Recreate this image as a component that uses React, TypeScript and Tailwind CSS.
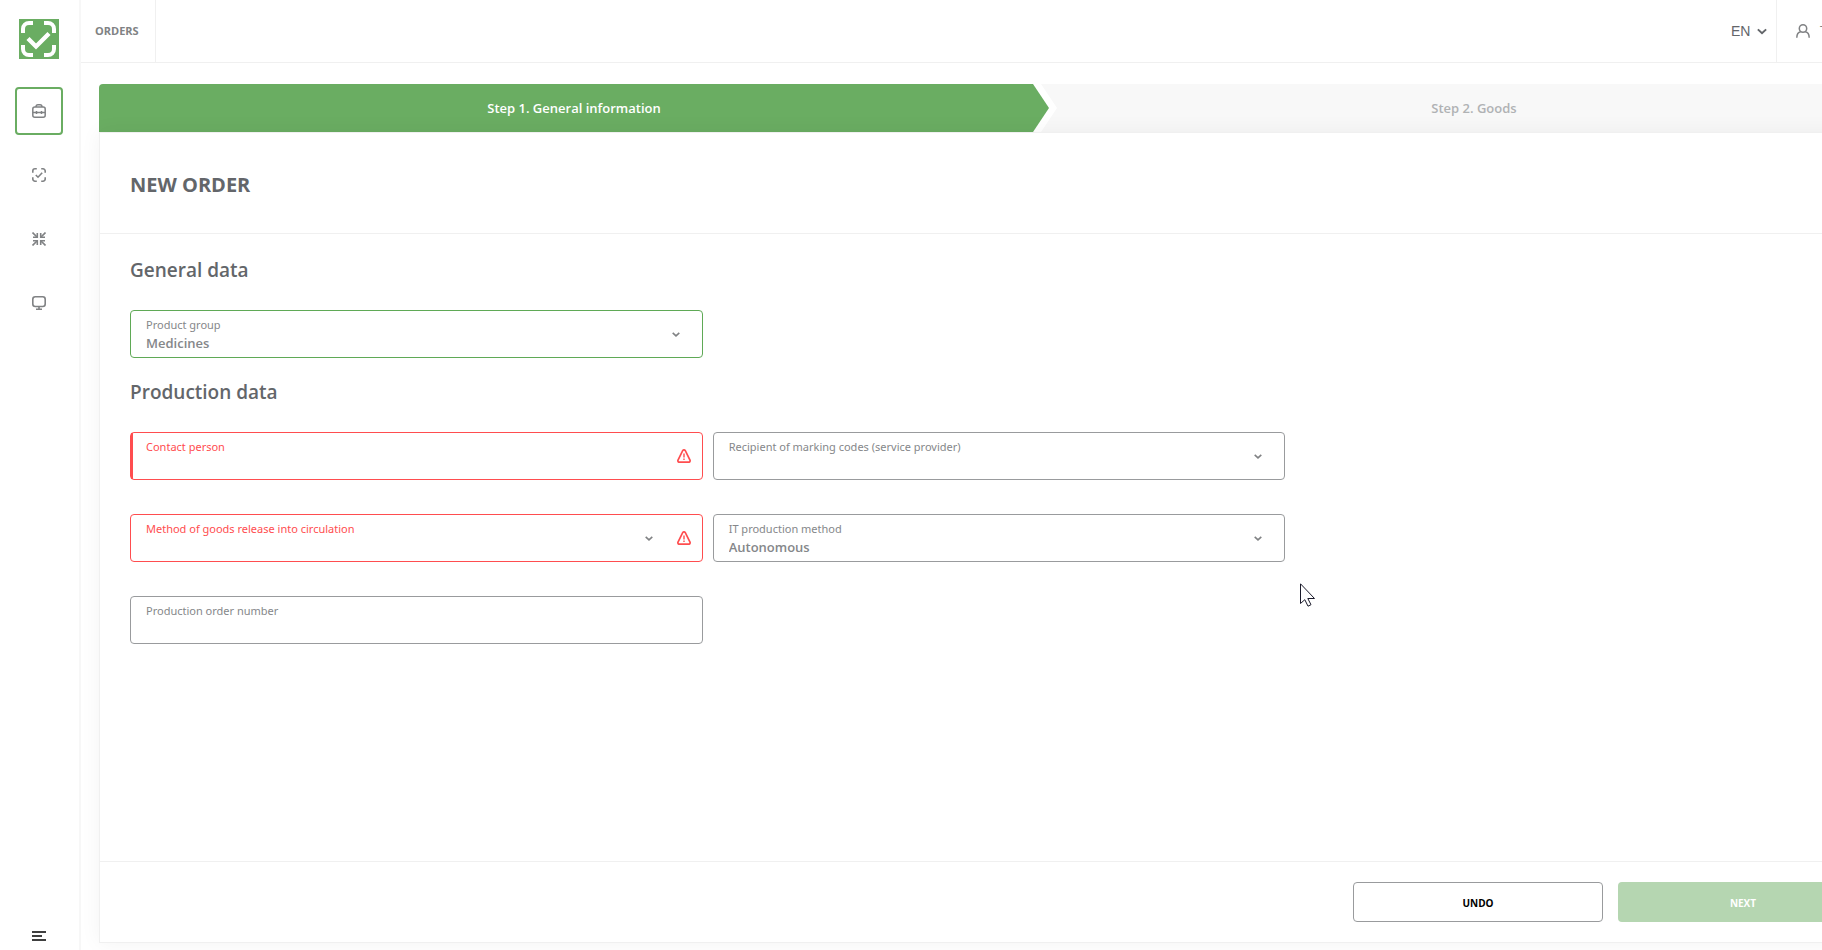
import { useState } from "react";
import type { ReactNode } from "react";

const tones = {
  ok: { border: "border-[#5fa956]", label: "text-[#85878a]" },
  error: { border: "border-[#ff4d4f]", label: "text-[#ff4d4f]" },
  plain: { border: "border-[#999b9d]", label: "text-[#85878a]" },
};

type Tone = keyof typeof tones;

const ChevronIcon = ({ className }: { className: string }) => (
  <svg viewBox="0 0 8 5" fill="none" stroke="currentColor" className={className}>
    <path d="M0.7 0.8 4 3.8 7.3 0.8" strokeWidth="1.6" />
  </svg>
);

const WarningIcon = () => (
  <svg
    viewBox="0 0 14 14"
    fill="none"
    stroke="currentColor"
    className="size-3.5 shrink-0 text-[#ff4d4f]"
  >
    <path
      d="M5.7 1.7a1.5 1.5 0 0 1 2.6 0l4.7 9.4c.4.9-.2 2.1-1.2 2.1H2.2c-1 0-1.6-1.2-1.2-2.1z"
      strokeWidth="1.7"
    />
    <path d="M7 4.5v4M7 9.5v1.5" strokeWidth="1.4" />
  </svg>
);

const LogoIcon = () => (
  <svg viewBox="0 0 40 40" fill="none" stroke="#fff" className="size-10">
    <path d="M0 0h40v40H0z" fill="#6aad62" stroke="none" />
    <path
      d="M4 14V10a6 6 0 0 1 6-6h4M25 4h4a6 6 0 0 1 6 6v4M35 26v4a6 6 0 0 1-6 6h-4M14 36h-4a6 6 0 0 1-6-6v-4"
      strokeWidth="4"
    />
    <path d="M9 19.5 17 27.5 30 14.5" strokeWidth="4.4" />
  </svg>
);

const BriefcaseIcon = () => (
  <svg viewBox="0 0 14 14" fill="none" stroke="currentColor" strokeWidth="1.5" className="size-3.5">
    <rect x="0.8" y="3" width="12.4" height="10.2" rx="2" />
    <path d="M4 3c0-1.4.8-2.2 2-2.2h2c1.2 0 2 .8 2 2.2M1 8.5h12M4.5 7v3M9.5 7v3" />
  </svg>
);

const ScanIcon = () => (
  <svg viewBox="0 0 14 14" fill="none" stroke="currentColor" strokeWidth="1.6" className="size-3.5">
    <path d="M.8 4.8V3A2.2 2.2 0 0 1 3 .8h1.8M9.2.8H11A2.2 2.2 0 0 1 13.2 3v1.8M13.2 9.2V11a2.2 2.2 0 0 1-2.2 2.2H9.2M4.8 13.2H3A2.2 2.2 0 0 1 .8 11V9.2" />
    <path d="M3.8 7 6 9.2 10.2 4.8" />
  </svg>
);

const CollapseIcon = () => (
  <svg viewBox="0 0 14 14" fill="none" stroke="currentColor" strokeWidth="1.6" className="size-3.5">
    <path d="M.5.5 5 5M13.5.5 9 5M.5 13.5 5 9M13.5 13.5 9 9" />
    <path d="M5.3 1v4.3H1M8.7 1v4.3H13M5.3 13V8.7H1M8.7 13V8.7H13" />
  </svg>
);

const MonitorIcon = () => (
  <svg viewBox="0 0 14 14" fill="none" stroke="currentColor" strokeWidth="1.6" className="size-3.5">
    <rect x="0.8" y="0.8" width="12.4" height="9.7" rx="2.5" />
    <path d="M7 10.5v2.5M4 13.2h6" />
  </svg>
);

const MenuIcon = () => (
  <svg viewBox="0 0 14 10" fill="none" stroke="currentColor" strokeWidth="1.6" className="h-2.5 w-3.5">
    <path d="M0 1h14M0 5h10M0 9h14" />
  </svg>
);

const UserIcon = () => (
  <svg viewBox="0 0 14 14" fill="none" stroke="currentColor" strokeWidth="1.5" className="size-3.5">
    <circle cx="7" cy="4.5" r="3.7" />
    <path d="M.8 13.8c0-3.5 1.7-5.6 4-6M13.2 13.8c0-3.5-1.7-5.6-4-6" />
  </svg>
);

const navItems = [
  { name: "Orders", icon: <BriefcaseIcon /> },
  { name: "Marking codes", icon: <ScanIcon /> },
  { name: "Aggregation", icon: <CollapseIcon /> },
  { name: "Devices", icon: <MonitorIcon /> },
];

const Field = ({
  id,
  label,
  tone = "plain",
  marked = false,
  children,
}: {
  id: string;
  label: string;
  tone?: Tone;
  marked?: boolean;
  children: ReactNode;
}) => (
  <div
    className={`relative flex h-12 items-center gap-6 rounded border pl-[15px] ${tones[tone].border}`}
  >
    {marked && <span className="absolute inset-y-0 left-0 w-0.5 bg-[#ff4d4f]" />}
    <label
      htmlFor={id}
      className={`pointer-events-none absolute top-1.5 font-['Noto_Sans',sans-serif] text-[11px] leading-4 ${tones[tone].label}`}
    >
      {label}
    </label>
    {children}
  </div>
);

const controlClass =
  "h-full min-w-0 flex-1 appearance-none bg-transparent pt-[22px] pb-1 text-[13px] leading-5 font-semibold text-[#85878a] outline-none";

const App = () => {
  const [active, setActive] = useState("Orders");
  const [group, setGroup] = useState("Medicines");
  const [contact, setContact] = useState("");
  const [recipient, setRecipient] = useState("");
  const [release, setRelease] = useState("");
  const [method, setMethod] = useState("Autonomous");
  const [orderNumber, setOrderNumber] = useState("");

  return (
    <div className="overflow-x-hidden bg-white font-['Open_Sans',sans-serif] text-[#63666a]">
      <div className="flex min-h-screen min-w-[1919px]">
        <aside className="flex w-[81px] shrink-0 flex-col border-r-2 border-[#f7f7f7] pt-[19px] pl-[15px] text-[#808284]">
          <a href="#" aria-label="Home" className="ml-1 size-10">
            <LogoIcon />
          </a>
          <nav className="mt-7 flex flex-col gap-4">
            {navItems.map((item) => (
              <button
                key={item.name}
                type="button"
                aria-label={item.name}
                onClick={() => setActive(item.name)}
                className={`flex size-12 items-center justify-center rounded border-2 ${
                  active === item.name ? "border-[#6aad62]" : "border-transparent"
                }`}
              >
                {item.icon}
              </button>
            ))}
          </nav>
          <button
            type="button"
            aria-label="Menu"
            className="mt-auto flex h-7 w-12 items-center justify-center text-black"
          >
            <MenuIcon />
          </button>
        </aside>

        <div className="flex flex-1 flex-col">
          <header className="flex h-[63px] border-b border-[#f0f0f0]">
            <a
              href="#"
              className="flex w-[75px] items-center border-r border-[#f0f0f0] pl-3.5 text-[11px] font-bold text-[#808284]"
            >
              ORDERS
            </a>
            <div className="ml-auto flex items-center gap-1.5 pr-[9px] font-['Liberation_Sans',sans-serif] text-sm text-[#63666a]">
              <select aria-label="Language" className="appearance-none bg-transparent outline-none">
                <option>EN</option>
              </select>
              <ChevronIcon className="h-[7px] w-2.5" />
            </div>
            <a
              href="#"
              className="flex w-[143px] items-center gap-2.5 border-l border-[#f0f0f0] pl-[19px] text-sm text-[#808284]"
            >
              <UserIcon />
              T
            </a>
          </header>

          <main className="flex flex-1 flex-col pt-[21px] pr-5 pb-[7px] pl-[18px]">
            <ol className="grid h-12 grid-cols-[19fr_17fr] text-[13px] font-semibold">
              <li className="flex items-center justify-center rounded-tl bg-[#6aad62] pt-0.5 text-white [clip-path:polygon(0_0,calc(100%_-_16px)_0,100%_50%,calc(100%_-_16px)_100%,0_100%)]">
                Step 1. General information
              </li>
              <li className="-ml-2 flex items-center justify-center bg-[#f8f8f8] pt-0.5 pl-2 text-[#b0b2b4] [clip-path:polygon(0_0,100%_0,100%_100%,0_100%,16px_50%)]">
                Step 2. Goods
              </li>
            </ol>

            <form
              onSubmit={(e) => e.preventDefault()}
              className="relative flex flex-1 flex-col border border-[#f0f0f0] bg-white shadow-[0_0_20px_rgba(0,0,0,0.05)]"
            >
              <div className="flex h-[101px] items-center border-b border-[#f0f0f0] px-[30px] pt-1">
                <h1 className="text-xl font-bold">NEW ORDER</h1>
              </div>

              <div className="flex-1 px-[30px] pt-6">
                <h2 className="text-[19px] leading-6 font-semibold">General data</h2>
                <div className="mt-7 grid grid-cols-3 gap-[10px]">
                  <Field id="group" label="Product group" tone="ok">
                    <select
                      id="group"
                      value={group}
                      onChange={(e) => setGroup(e.target.value)}
                      className={controlClass}
                    >
                      <option>Medicines</option>
                    </select>
                    <ChevronIcon className="mr-[22px] h-[5px] w-2 shrink-0 text-[#808284]" />
                  </Field>
                </div>

                <h2 className="mt-[22px] text-[19px] leading-6 font-semibold">Production data</h2>
                <div className="mt-7 grid grid-cols-3 gap-x-[10px] gap-y-[34px]">
                  <Field id="contact" label="Contact person" tone="error" marked>
                    <input
                      id="contact"
                      type="text"
                      value={contact}
                      onChange={(e) => setContact(e.target.value)}
                      className={controlClass}
                    />
                    <span className="pr-[11px]">
                      <WarningIcon />
                    </span>
                  </Field>
                  <Field id="recipient" label="Recipient of marking codes (service provider)">
                    <select
                      id="recipient"
                      value={recipient}
                      onChange={(e) => setRecipient(e.target.value)}
                      className={controlClass}
                    >
                      <option value=""></option>
                    </select>
                    <ChevronIcon className="mr-[22px] h-[5px] w-2 shrink-0 text-[#808284]" />
                  </Field>
                  <div />
                  <Field id="release" label="Method of goods release into circulation" tone="error">
                    <select
                      id="release"
                      value={release}
                      onChange={(e) => setRelease(e.target.value)}
                      className={controlClass}
                    >
                      <option value=""></option>
                    </select>
                    <ChevronIcon className="h-[5px] w-2 shrink-0 text-[#808284]" />
                    <span className="pr-[11px]">
                      <WarningIcon />
                    </span>
                  </Field>
                  <Field id="method" label="IT production method">
                    <select
                      id="method"
                      value={method}
                      onChange={(e) => setMethod(e.target.value)}
                      className={controlClass}
                    >
                      <option>Autonomous</option>
                    </select>
                    <ChevronIcon className="mr-[22px] h-[5px] w-2 shrink-0 text-[#808284]" />
                  </Field>
                  <div />
                  <Field id="number" label="Production order number">
                    <input
                      id="number"
                      type="text"
                      value={orderNumber}
                      onChange={(e) => setOrderNumber(e.target.value)}
                      className={controlClass}
                    />
                  </Field>
                </div>
              </div>

              <div className="flex justify-end gap-[15px] border-t border-[#f0f0f0] px-[30px] py-5 text-[10px] font-bold">
                <button
                  type="button"
                  className="h-10 w-[250px] rounded border border-[#999b9d] pt-0.5 text-black"
                >
                  UNDO
                </button>
                <button
                  type="submit"
                  disabled
                  className="h-10 w-[250px] rounded bg-[#b5d6b1] pt-0.5 text-white"
                >
                  NEXT
                </button>
              </div>
            </form>
          </main>
        </div>
      </div>

      {/* mouse pointer */}
      <svg
        viewBox="0 0 16 24"
        fill="#fff"
        stroke="#1a1a2a"
        className="pointer-events-none absolute top-[583px] left-[1300px] h-6 w-4"
      >
        <path d="M.5.8v19.7l4.3-3.8 3.2 6.5 3-1.5-3.2-6.2h6.7z" />
      </svg>
    </div>
  );
};

export default App;
